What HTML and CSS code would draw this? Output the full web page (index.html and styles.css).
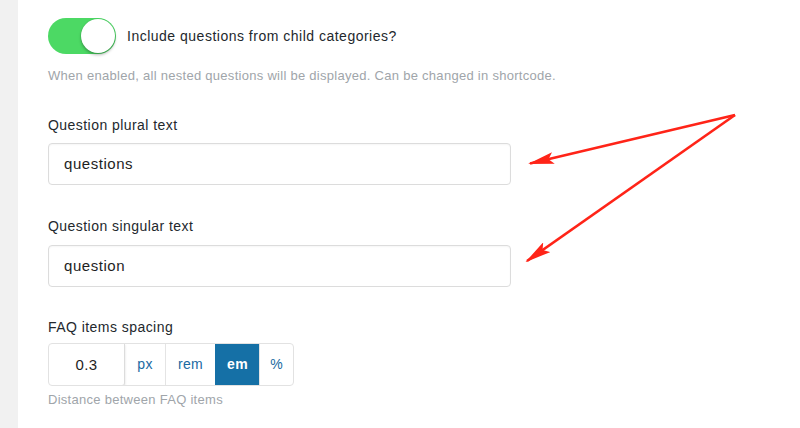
FILE: index.html
```html
<!DOCTYPE html>
<html lang="en">
<head>
<meta charset="utf-8">
<title>FAQ settings</title>
<link rel="stylesheet" href="styles.css">
</head>
<body>
<div class="page">
  <aside class="sidebar"></aside>
  <main class="content">
    <div class="toggle-row">
      <span class="switch"><span class="knob"></span></span>
      <span class="toggle-label">Include questions from child categories?</span>
    </div>
    <p class="help help-first">When enabled, all nested questions will be displayed. Can be changed in shortcode.</p>

    <div class="field field-plural">
      <label class="field-label">Question plural text</label>
      <div class="text-input">questions</div>
    </div>

    <div class="field field-singular">
      <label class="field-label">Question singular text</label>
      <div class="text-input">question</div>
    </div>

    <div class="field field-spacing">
      <label class="field-label">FAQ items spacing</label>
      <div class="unit-group">
        <div class="unit-number">0.3</div>
        <span class="unit unit-px">px</span>
        <span class="unit unit-rem">rem</span>
        <span class="unit unit-em active">em</span>
        <span class="unit unit-pct">%</span>
      </div>
      <p class="help help-last">Distance between FAQ items</p>
    </div>
  </main>
  <svg class="arrows" width="800" height="428" viewBox="0 0 800 428" aria-hidden="true">
    <defs>
      <marker id="head" viewBox="0 0 26 12" refX="24" refY="6" markerWidth="26" markerHeight="12" markerUnits="userSpaceOnUse" orient="auto">
        <path d="M0 0 L26 6 L0 12 L5 6 Z" fill="#ff2418"/>
      </marker>
    </defs>
    <line x1="735" y1="115" x2="530" y2="163.5" stroke="#ff2418" stroke-width="2.6" marker-end="url(#head)"/>
    <line x1="735" y1="115" x2="527" y2="261" stroke="#ff2418" stroke-width="2.6" marker-end="url(#head)"/>
  </svg>
</div>
</body>
</html>
```

FILE: styles.css
```css
html, body {
  margin: 0;
  padding: 0;
  background: #ffffff;
}

body {
  font-family: "Liberation Sans", Arial, sans-serif;
  color: #23282d;
  width: 800px;
  height: 428px;
  overflow: hidden;
}

.page {
  position: relative;
  display: flex;
  width: 800px;
  height: 428px;
}

.sidebar {
  width: 18px;
  flex: 0 0 18px;
  background: #f1f1f1;
}

.content {
  flex: 1;
  padding-left: 30px;
  display: flex;
  flex-direction: column;
}

.toggle-row {
  margin-top: 18px;
  height: 36px;
  display: flex;
  align-items: center;
  gap: 11px;
}

.switch {
  position: relative;
  width: 68px;
  height: 36px;
  border-radius: 18px;
  background: #4cd964;
  flex: 0 0 auto;
}

.knob {
  position: absolute;
  right: 1px;
  top: 1px;
  width: 34px;
  height: 34px;
  border-radius: 50%;
  background: #ffffff;
  box-shadow: 0 2px 3px rgba(0, 0, 0, 0.28), 0 0 0 0.5px rgba(0, 0, 0, 0.08);
}

.toggle-label {
  font-size: 14px;
  letter-spacing: 0.5px;
  color: #23282d;
}

.help {
  margin: 0;
  font-size: 13px;
  line-height: 18px;
  letter-spacing: 0.28px;
  color: #a0a5aa;
}

.help-first {
  margin-top: 13px;
}

.field {
  display: flex;
  flex-direction: column;
  align-items: flex-start;
}

.field-label {
  font-size: 14px;
  line-height: 20px;
  letter-spacing: 0.45px;
  color: #23282d;
}

.field-plural {
  margin-top: 30px;
}

.field-singular {
  margin-top: 31px;
}

.field-spacing {
  margin-top: 30px;
}

.text-input {
  box-sizing: border-box;
  width: 463px;
  height: 42px;
  margin-top: 8px;
  padding: 0 15px;
  border: 1px solid #dcdcdc;
  border-radius: 4px;
  box-shadow: inset 0 1px 2px rgba(0, 0, 0, 0.04);
  font-size: 15px;
  letter-spacing: 0.55px;
  line-height: 40px;
  color: #1e1e1e;
}

.field-singular .text-input {
  margin-top: 9px;
}

.unit-group {
  margin-top: 6px;
  box-sizing: border-box;
  height: 43px;
  display: flex;
  border: 1px solid #e2e2e2;
  border-radius: 4px;
  overflow: hidden;
}

.unit-number {
  box-sizing: border-box;
  width: 76px;
  height: 42px;
  border-right: 1px solid #dcdcdc;
  border-bottom: 1px solid #d8d8d8;
  border-radius: 0 0 3px 0;
  box-shadow: 1px 1px 2px rgba(0, 0, 0, 0.06);
  font-size: 15px;
  letter-spacing: 0.4px;
  line-height: 41px;
  text-align: center;
  color: #1e1e1e;
}

.unit {
  box-sizing: border-box;
  font-size: 14px;
  letter-spacing: 0.3px;
  line-height: 41px;
  color: #1a6aa2;
  text-align: center;
  border-left: 1px solid #e4e4e4;
}

.unit-px {
  width: 40px;
  border-left: none;
}

.unit-rem {
  width: 50px;
}

.unit-em {
  width: 44px;
}

.unit-pct {
  width: 34px;
}

.unit.active {
  background: #1570a6;
  color: #ffffff;
  font-weight: bold;
  border-left-color: #1570a6;
}

.help-last {
  margin-top: 5px;
}

.arrows {
  position: absolute;
  left: 0;
  top: 0;
  pointer-events: none;
}
```
